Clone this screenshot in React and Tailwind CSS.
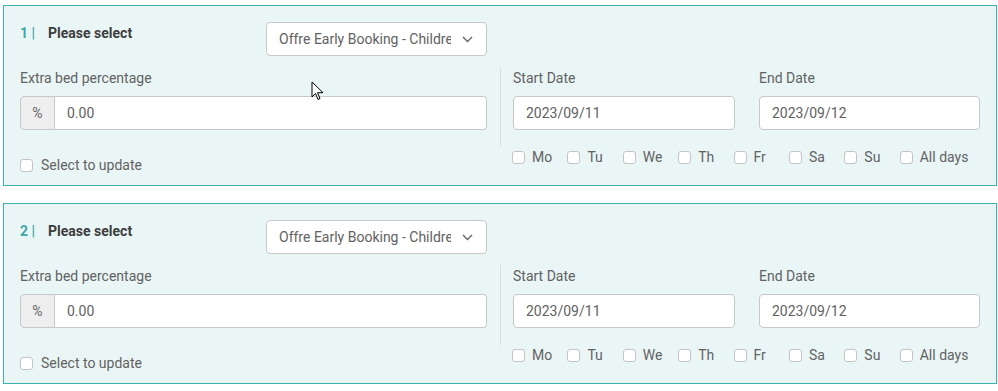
import React from "react";

const font = { fontFamily: "Roboto, 'Noto Sans', sans-serif" };

function Box() {
  return (
    <span className="block w-[13px] h-[13px] shrink-0 rounded-[3px] border border-[#c4c4c4] bg-white" />
  );
}

function Panel({ n }) {
  const days = ["Mo", "Tu", "We", "Th", "Fr", "Sa", "Su", "All days"];
  return (
    <div className="w-[994px] border border-[#3fb1ad] bg-[#eaf6f6] pt-[16px] pb-[10px] pl-[16px] pr-[16px] text-[14px] text-[#626262]">
      <div className="flex w-[467px] items-start justify-between">
        <div className="flex pt-[1px] leading-[20px] font-bold">
          <span className="text-[#3ea9a6]">{n} |</span>
          <span className="ml-[13px] text-[#3d3d3d]">Please select</span>
        </div>
        <div className="flex h-[34px] w-[221px] items-center rounded-[4px] border border-[#c8c8c8] bg-white pl-[12px]">
          <div className="w-[172px] overflow-hidden whitespace-nowrap leading-[20px]">
            Offre Early Booking - Children
          </div>
          <svg className="ml-[11px]" width="11" height="7" viewBox="0 0 11 7" fill="none">
            <path d="M1 1l4.5 4.5L10 1" stroke="#666" strokeWidth="1.4" />
          </svg>
        </div>
      </div>
      <div className="mt-[11px] flex">
        <div className="flex w-[467px] flex-col">
          <div className="pt-[1px] leading-[20px]">Extra bed percentage</div>
          <div className="mt-[8px] flex h-[34px]">
            <div className="flex w-[35px] items-center justify-center rounded-l-[4px] border border-[#c8c8c8] bg-[#eeeeee] text-[#666]">
              %
            </div>
            <div className="flex flex-1 items-center rounded-r-[4px] border border-l-0 border-[#c8c8c8] bg-white pl-[12px]">
              0.00
            </div>
          </div>
          <div className="mt-[25px] flex h-[20px] items-center gap-[8px]">
            <Box />
            <span className="leading-[20px]">Select to update</span>
          </div>
        </div>
        <div className="ml-[13px] flex flex-1 flex-col">
          <div className="flex border-l border-[#d9dcdc] pl-[12px] pt-[1px] pb-[17px]">
            <div className="flex w-[222px] flex-col">
              <div className="leading-[20px]">Start Date</div>
              <div className="mt-[8px] flex h-[34px] items-center rounded-[4px] border border-[#c8c8c8] bg-white pl-[12px]">
                2023/09/11
              </div>
            </div>
            <div className="ml-[24px] flex w-[221px] flex-col">
              <div className="leading-[20px]">End Date</div>
              <div className="mt-[8px] flex h-[34px] items-center rounded-[4px] border border-[#c8c8c8] bg-white pl-[12px]">
                2023/09/12
              </div>
            </div>
          </div>
          <div className="flex h-[20px] items-center pl-[12px]">
            {days.map((d) => (
              <div key={d} className="flex w-[55.4px] shrink-0 items-center gap-[7px] whitespace-nowrap">
                <Box />
                <span className="leading-[20px]">{d}</span>
              </div>
            ))}
          </div>
        </div>
      </div>
    </div>
  );
}

export default function App() {
  return (
    <div className="relative h-[391px] w-[998px] bg-white pl-[3px] pt-[5px]" style={font}>
      <Panel n={1} />
      <div className="mt-[17px]">
        <Panel n={2} />
      </div>
      <svg className="absolute left-[311px] top-[81px]" width="13" height="20" viewBox="0 0 13 20">
        <path d="M1 1v15l3.5-3.5 2.5 6 2-1-2.5-5.8H12z" fill="#fff" stroke="#000" strokeWidth="1" strokeLinejoin="round" />
      </svg>
    </div>
  );
}
